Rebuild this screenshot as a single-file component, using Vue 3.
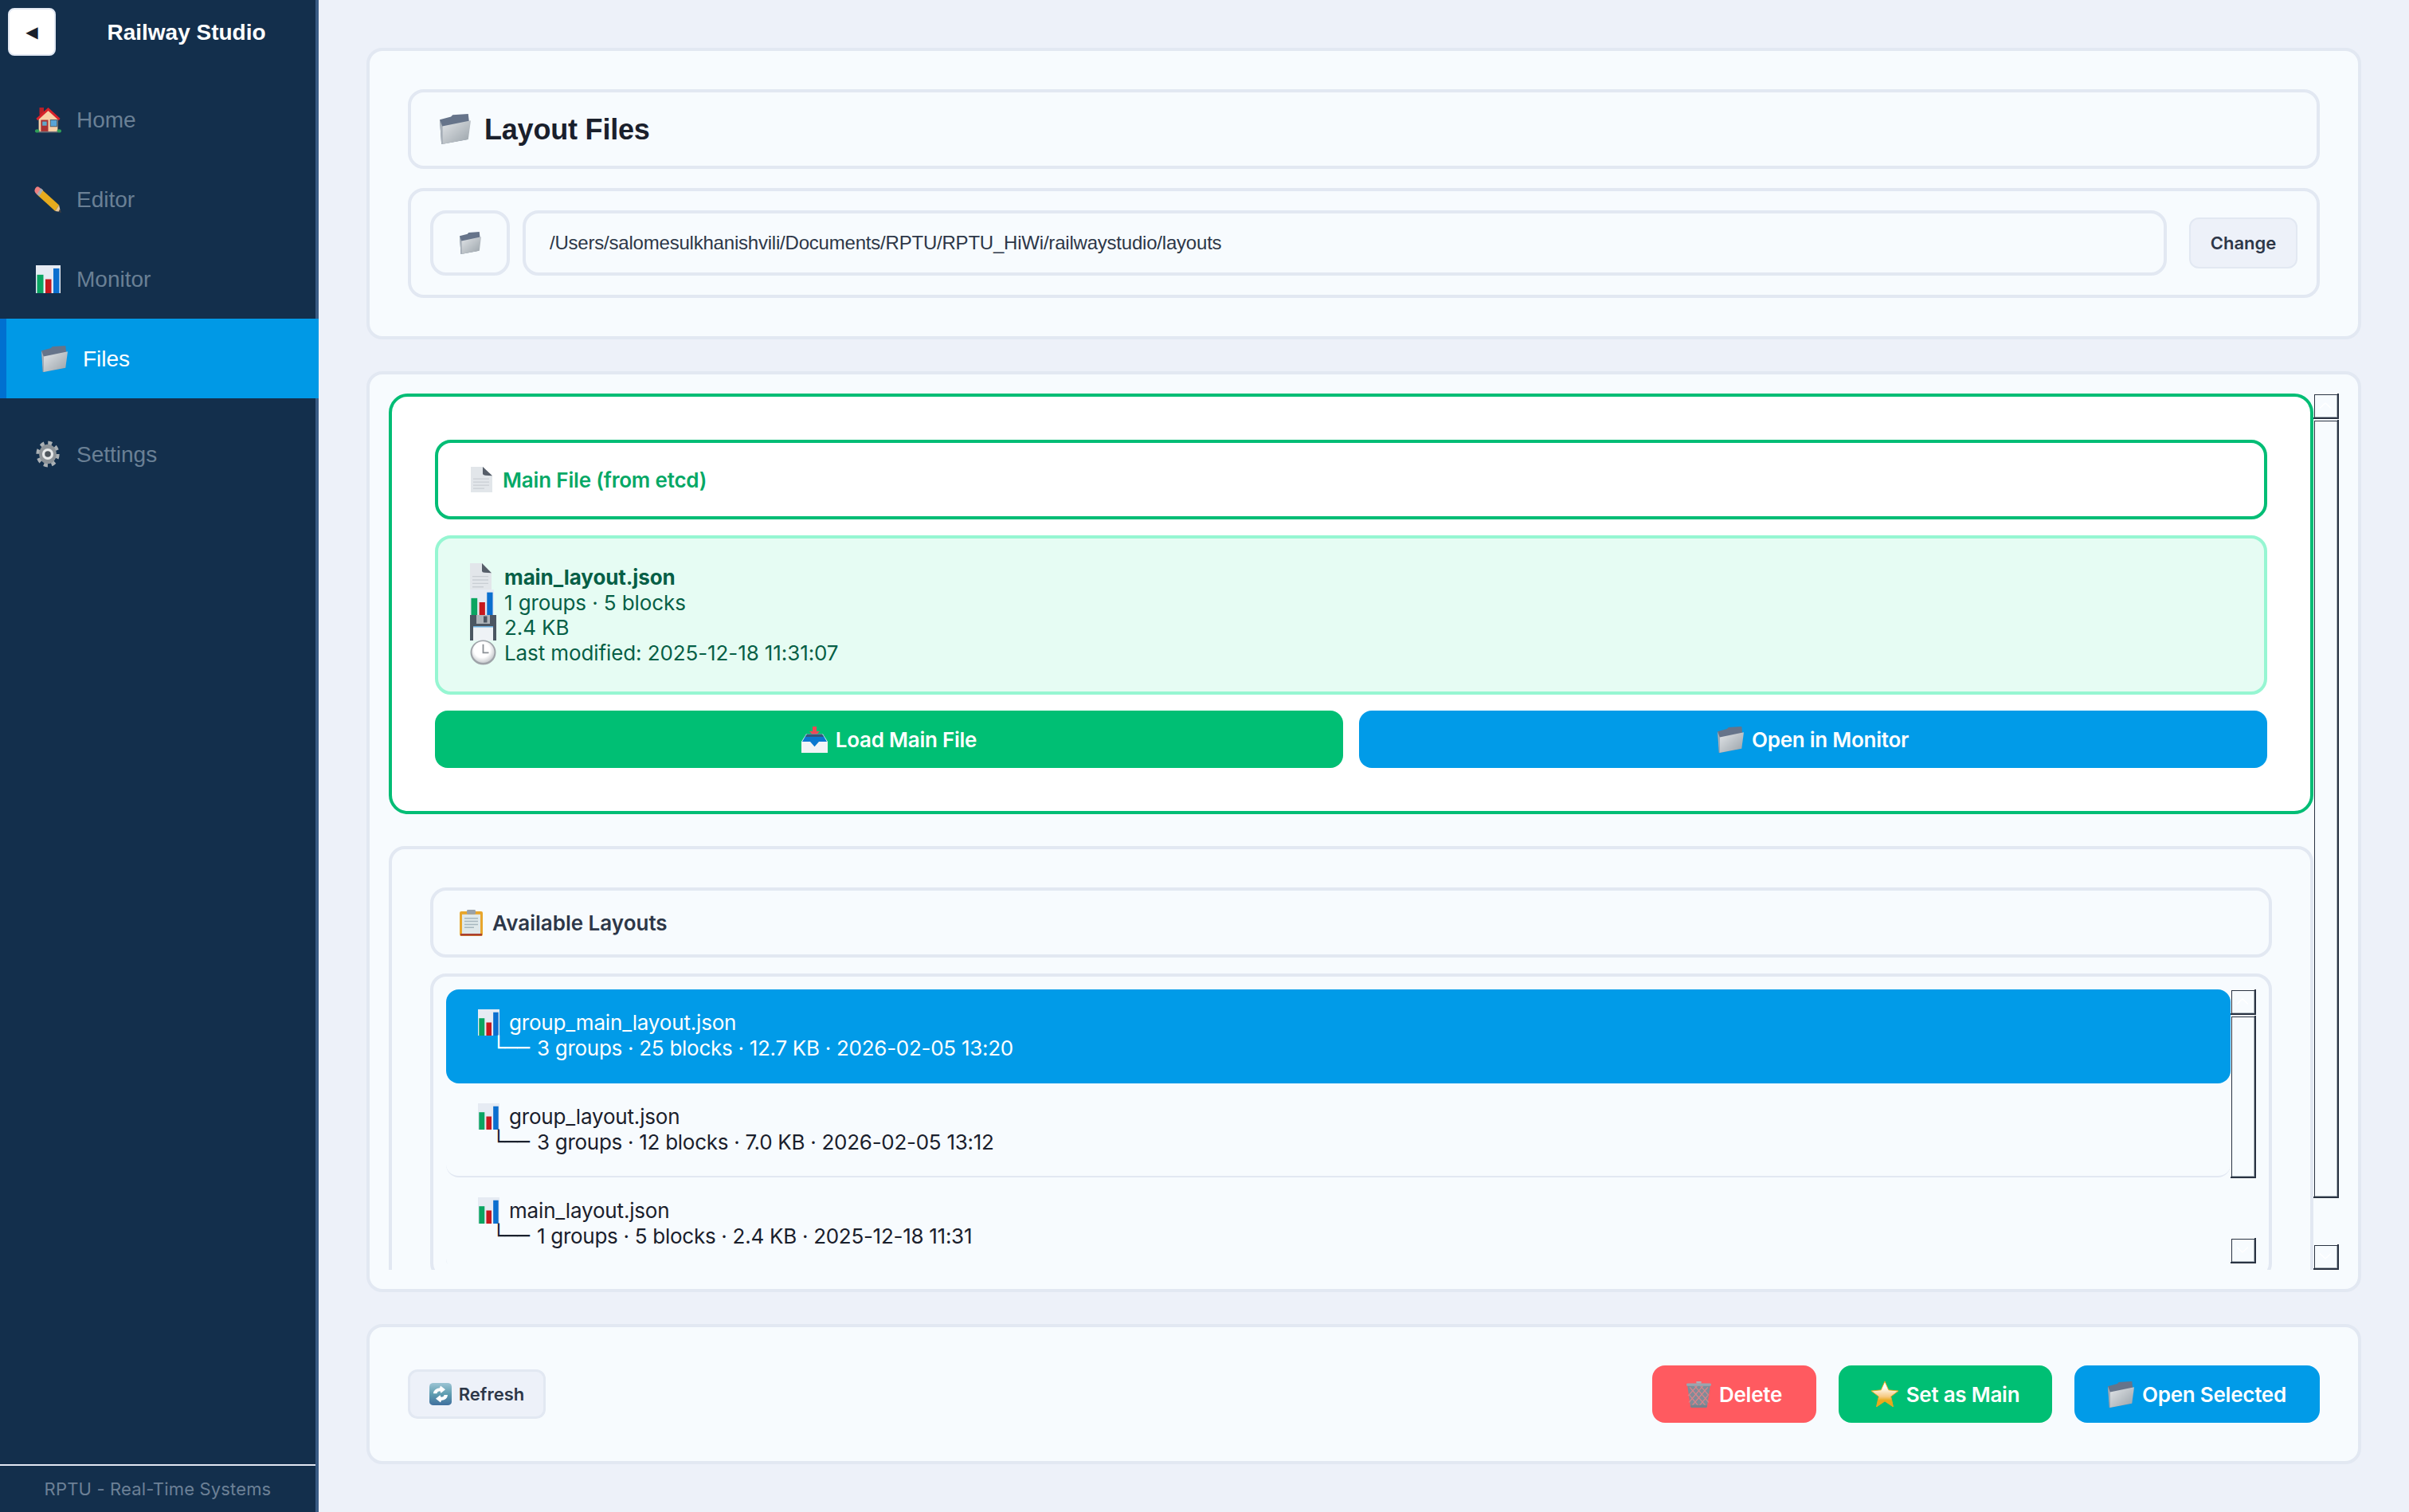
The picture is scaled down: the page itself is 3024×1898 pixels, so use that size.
<script setup>
const nav = [
  { label: 'Home', icon: 'house', cls: 'i-house' },
  { label: 'Editor', icon: 'pencil', cls: 'i-pencil' },
  { label: 'Monitor', icon: 'chart', cls: 'i-chart' },
  { label: 'Files', icon: 'folder', cls: 'i-folder', active: true },
  { label: 'Settings', icon: 'gear', cls: 'i-gear', sep: true }
]

const infoLines = [
  { icon: 'doc', text: 'main_layout.json', strong: true },
  { icon: 'chart', text: '1 groups · 5 blocks' },
  { icon: 'floppy', text: '2.4 KB' },
  { icon: 'clock', text: 'Last modified: 2025-12-18 11:31:07' }
]

const layouts = [
  { name: 'group_main_layout.json', meta: '3 groups · 25 blocks · 12.7 KB · 2026-02-05 13:20', selected: true },
  { name: 'group_layout.json', meta: '3 groups · 12 blocks · 7.0 KB · 2026-02-05 13:12' },
  { name: 'main_layout.json', meta: '1 groups · 5 blocks · 2.4 KB · 2025-12-18 11:31' }
]
</script>

<template>
  <div class="app">
    <!-- emoji aren't installed in the sandbox, so they live here as symbols -->
    <svg class="sprite" aria-hidden="true">
      <defs>
        <linearGradient id="g-folder" x1="0" y1="0" x2="1" y2="1">
          <stop offset="0" stop-color="#e2e5e8" />
          <stop offset="1" stop-color="#98a1a8" />
        </linearGradient>
        <linearGradient id="g-star" x1="0" y1="0" x2="0" y2="1">
          <stop offset="0.25" stop-color="#fffdf5" />
          <stop offset="0.6" stop-color="#f6c981" />
          <stop offset="0.75" stop-color="#e7a91c" />
        </linearGradient>
        <linearGradient id="g-refresh" x1="0" y1="0" x2="0" y2="1">
          <stop offset="0" stop-color="#9cc4d4" />
          <stop offset="0.5" stop-color="#5f9db0" />
          <stop offset="1" stop-color="#3f6f9e" />
        </linearGradient>
        <radialGradient id="g-clock" cx="0.45" cy="0.4" r="0.7">
          <stop offset="0.5" stop-color="#ffffff" />
          <stop offset="1" stop-color="#b4b8bc" />
        </radialGradient>
      </defs>

      <symbol id="house" viewBox="0 0 36 32" preserveAspectRatio="none">
        <rect x="6" y="1" width="6" height="9" fill="#b81f28" />
        <path d="M5 14 18 4l13 10v16H5z" fill="#f8cfa6" />
        <path d="M2.500 15.500 18 3l15.500 12.500" fill="none" stroke="#d9222a" stroke-width="3" />
        <rect x="8" y="16" width="10" height="14" fill="#a83232" />
        <rect x="10" y="18" width="6" height="5" fill="#5fa8c8" />
        <rect x="21" y="16" width="9" height="8" fill="#58a4d6" stroke="#50606a" />
        <ellipse cx="3" cy="29.500" rx="3" ry="2" fill="#2f9e57" />
        <ellipse cx="33" cy="29.500" rx="3" ry="2" fill="#2f9e57" />
        <rect x="5" y="30" width="26" height="1.500" fill="#70707a" />
      </symbol>

      <symbol id="pencil" viewBox="0 0 36 32" preserveAspectRatio="none">
        <path d="M27 30 4 11l5-7 23 19z" fill="#e6ab1e" />
        <path d="M4 11 9 4 6.500 2Q3.500 0 1.500 3T1.500 8.500z" fill="#ef7f7f" />
        <path d="M3.500 10 8.500 3l3 2.400-5 7z" fill="#a9acb0" />
        <path d="M27 30 32 23l2 8z" fill="#eac89a" />
        <path d="M33 27.500l2 4.500-3.600-1z" fill="#3d3d40" />
      </symbol>

      <symbol id="chart" viewBox="0 0 31 31" preserveAspectRatio="none">
        <rect width="31" height="31" fill="#e6ebf3" />
        <rect x="1.500" y="10.500" width="8" height="20.500" fill="#0aa562" />
        <rect x="12" y="15.500" width="7.500" height="15.500" fill="#c7181d" />
        <rect x="22" y="3.500" width="7.500" height="27.500" fill="#0b6fcf" />
      </symbol>

      <symbol id="folder" viewBox="0 0 36 32" preserveAspectRatio="none">
        <path d="M0 6 13 3l2-2 18-1 1 8-2 19L2 32z" fill="#66748a" />
        <path d="M3 13 36 7l-3 20L3 32z" fill="url(#g-folder)" />
        <path d="M0 6l3 7v19H2z" fill="#aab2ba" />
      </symbol>

      <symbol id="gear" viewBox="0 0 36 32" preserveAspectRatio="none">
        <circle cx="18" cy="16" r="12.500" fill="none" stroke="#aab0b4" stroke-width="6" stroke-dasharray="5 4.800" />
        <circle cx="18" cy="16" r="11.500" fill="#8d9398" />
        <ellipse cx="18" cy="16" rx="7.500" ry="6.500" fill="#e7e9ea" />
        <ellipse cx="18" cy="16" rx="4" ry="3.500" fill="#4e565d" />
      </symbol>

      <symbol id="doc" viewBox="0 0 27 40" preserveAspectRatio="none">
        <path d="M0 0h15l12 14v26H0z" fill="#e2e6ea" />
        <path d="M15 0v11q0 2 3 2.500l9 .500z" fill="#565e69" />
        <path d="M3 19h20M3 24h20M3 29h20M3 34h14" stroke="#c9ced3" stroke-width="1.500" />
      </symbol>

      <symbol id="floppy" viewBox="0 0 33 32" preserveAspectRatio="none">
        <rect width="33" height="32" fill="#4b5662" />
        <rect x="8" y="0" width="17" height="11" fill="#aeb4ba" />
        <rect x="17" y="1.500" width="4.500" height="8" fill="#4b5662" />
        <rect x="4" y="14" width="25" height="18" fill="#eef2f6" />
        <rect x="4" y="14" width="25" height="1.500" fill="#6fb2e0" />
      </symbol>

      <symbol id="clock" viewBox="0 0 33 33" preserveAspectRatio="none">
        <circle cx="16.500" cy="16.500" r="16" fill="#9ea3a8" />
        <circle cx="16.500" cy="16" r="14" fill="url(#g-clock)" />
        <path d="M16.500 6v11h7" fill="none" stroke="#8b9095" stroke-width="1.800" />
      </symbol>

      <symbol id="inbox" viewBox="0 0 33 38" preserveAspectRatio="none">
        <path d="M14 0h5v7h4l-6.500 8L10 7h4z" fill="#ee4a55" />
        <path d="M0 22 6 11h21l6 11v16H0z" fill="#f2f4f7" />
        <path d="M6 12h21l5 10H22l-5.500 7L11 22H1z" fill="#0b78d0" />
        <path d="M7 11h19l2 4H5z" fill="#36577a" />
      </symbol>

      <symbol id="clipboard" viewBox="0 0 29 34" preserveAspectRatio="none">
        <rect y="2" width="29" height="32" rx="2" fill="#e8a62c" />
        <rect x="3" y="6" width="23" height="25" fill="#dfe8ea" />
        <path d="M6 11h17M6 15h17M6 19h17M6 23h12" stroke="#a6b6be" stroke-width="1.500" />
        <rect x="9" y="0" width="11" height="6" rx="1.500" fill="#9aa2aa" />
        <rect x="1" y="31" width="27" height="2.500" fill="#a83a32" />
      </symbol>

      <symbol id="trash" viewBox="0 0 30 40" preserveAspectRatio="none">
        <path d="M1 5h28l-4 34H5z" fill="#7f8c98" />
        <path d="M4 9l20 29M10 7l17 25M17 7l10 14M3 20l12 18M26 9 6 38M20 7 3 32M13 7 2 22M27 20 15 38" stroke="#d9858b" stroke-width="1.300" />
        <rect x="0" y="3" width="30" height="4" rx="1.500" fill="#9aa5af" />
        <rect x="5" y="36" width="20" height="4" rx="1.500" fill="#76828d" />
        <rect x="12" y="0" width="6" height="3" fill="#a9b2ba" />
      </symbol>

      <symbol id="star" viewBox="0 0 34 36" preserveAspectRatio="none">
        <path d="M17 0l4.800 12.200L34 13.500l-9.300 8L27.500 36 17 28 6.500 36l2.800-14.500L0 13.500l12.200-1.300z" fill="url(#g-star)" stroke="#e9a71f" stroke-width="1" />
      </symbol>

      <symbol id="refresh" viewBox="0 0 28 32" preserveAspectRatio="none">
        <rect width="28" height="32" rx="5" fill="url(#g-refresh)" />
        <path d="M5 15q.500-7 8-8l1-3 6 5.500-5.500 5-1-2.800q-4 .5-4 3.300z" fill="#fff" />
        <path d="M23 17q-.5 7-8 8l-1 3-6-5.500 5.500-5 1 2.800q4-.5 4-3.300z" fill="#fff" />
      </symbol>
    </svg>

    <aside class="sidebar">
      <header class="side-head">
        <button class="toggle">◀</button>
        <div class="brand">Railway Studio</div>
      </header>
      <nav class="side-nav">
        <a
          v-for="item in nav"
          :key="item.label"
          class="nav-item"
          :class="{ active: item.active, sep: item.sep }"
        >
          <span class="nav-icon">
            <svg class="ico" :class="item.cls"><use :href="'#' + item.icon" /></svg>
          </span>
          <span class="nav-label">{{ item.label }}</span>
        </a>
      </nav>
      <footer class="side-foot">RPTU - Real-Time Systems</footer>
    </aside>

    <main class="main">
      <section class="panel panel-top">
        <div class="box page-title">
          <svg class="ico i-title"><use href="#folder" /></svg>
          <h1>Layout Files</h1>
        </div>
        <div class="box path-row">
          <button class="folder-btn">
            <svg class="ico i-small"><use href="#folder" /></svg>
          </button>
          <div class="path-input">/Users/salomesulkhanishvili/Documents/RPTU/RPTU_HiWi/railwaystudio/layouts</div>
          <button class="change-btn">Change</button>
        </div>
      </section>

      <section class="panel panel-mid">
        <div class="scroll-view">
          <div class="main-card">
            <div class="main-head">
              <svg class="ico i-doc"><use href="#doc" /></svg>
              <span>Main File (from etcd)</span>
            </div>
            <div class="info-box">
              <div v-for="line in infoLines" :key="line.text" class="info-line">
                <svg class="ico i-info" :class="'i-info-' + line.icon"><use :href="'#' + line.icon" /></svg>
                <strong v-if="line.strong">{{ line.text }}</strong>
                <span v-else>{{ line.text }}</span>
              </div>
            </div>
            <div class="main-actions">
              <button class="btn green">
                <svg class="ico i-btn"><use href="#inbox" /></svg>
                Load Main File
              </button>
              <button class="btn blue">
                <svg class="ico i-btn"><use href="#folder" /></svg>
                Open in Monitor
              </button>
            </div>
          </div>

          <div class="list-card">
            <div class="box list-head">
              <svg class="ico i-clip"><use href="#clipboard" /></svg>
              <span>Available Layouts</span>
            </div>
            <div class="box list-box">
              <div class="list-view">
                <div class="list-items">
                  <div v-for="f in layouts" :key="f.name" class="file-row" :class="{ selected: f.selected }">
                    <div class="file-name">
                      <svg class="ico i-file"><use href="#chart" /></svg>
                      <span>{{ f.name }}</span>
                    </div>
                    <div class="file-meta">
                      <span class="tree">└──</span>
                      <span>{{ f.meta }}</span>
                    </div>
                  </div>
                </div>
                <div class="sb sb-list">
                  <div class="sb-btn">
                    <svg viewBox="0 0 16 8"><path d="M1 7.500 8 1l7 6.500" /></svg>
                  </div>
                  <div class="sb-thumb"></div>
                  <div class="sb-btn sb-down">
                    <svg viewBox="0 0 16 8"><path d="M1 .5 8 7l7-6.500" /></svg>
                  </div>
                </div>
              </div>
            </div>
          </div>
        </div>
        <div class="sb sb-page">
          <div class="sb-btn">
            <svg viewBox="0 0 16 8"><path d="M1 7.500 8 1l7 6.500" /></svg>
          </div>
          <div class="sb-thumb"></div>
          <div class="sb-btn sb-down">
            <svg viewBox="0 0 16 8"><path d="M1 .5 8 7l7-6.500" /></svg>
          </div>
        </div>
      </section>

      <section class="panel panel-bottom">
        <button class="refresh-btn">
          <svg class="ico i-refresh"><use href="#refresh" /></svg>
          Refresh
        </button>
        <div class="bottom-actions">
          <button class="btn red act-delete">
            <svg class="ico i-trash"><use href="#trash" /></svg>
            Delete
          </button>
          <button class="btn green act-main">
            <svg class="ico i-star"><use href="#star" /></svg>
            Set as Main
          </button>
          <button class="btn blue act-open">
            <svg class="ico i-btn"><use href="#folder" /></svg>
            Open Selected
          </button>
        </div>
      </section>
    </main>
  </div>
</template>

<style>
html,
body {
  margin: 0;
  background: #edf1f9;
}
</style>

<style scoped>
.app {
  display: flex;
  width: 3024px;
  height: 1898px;
  overflow: hidden;
  font-family: 'Inter', sans-serif;
}

.sprite {
  position: absolute;
  width: 0;
  height: 0;
}

.ico {
  display: block;
  flex: none;
}

button {
  font-family: inherit;
  cursor: pointer;
}

/* sidebar */
.sidebar {
  width: 400px;
  flex: none;
  box-sizing: border-box;
  display: flex;
  flex-direction: column;
  background: #132f4c;
  border-right: 4px solid #3a5c85;
  font-family: 'Liberation Sans', sans-serif;
}

.side-head {
  display: flex;
  align-items: center;
  height: 100px;
  box-sizing: border-box;
  padding: 0 0 20px 10px;
}

.toggle {
  width: 60px;
  height: 60px;
  flex: none;
  padding: 0;
  background: #fff;
  border: 2px solid #e2e8f2;
  border-radius: 8px;
  color: #1a202c;
  font-family: 'DejaVu Sans', sans-serif;
  font-size: 20px;
}

.brand {
  flex: 1;
  text-align: center;
  color: #fff;
  font-size: 28px;
  font-weight: 700;
  padding: 2px 0 0 2px;
}

.side-nav {
  flex: 1;
  display: flex;
  flex-direction: column;
  margin-right: -4px;
}

.nav-item {
  display: flex;
  align-items: center;
  height: 100px;
  flex: none;
  padding-left: 42px;
  color: #6a8095;
  font-size: 28px;
}

.nav-item.active {
  padding-left: 42px;
  border-left: 8px solid #0070d0;
  background: #0099e6;
  color: #fff;
}

.nav-item.sep {
  margin-top: 20px;
}

.nav-label {
  padding-top: 2px;
}

.nav-icon {
  width: 36px;
  margin-right: 18px;
  display: flex;
  justify-content: center;
}

.i-house { width: 33px; height: 33px; }
.i-pencil { width: 35px; height: 34px; }
.i-chart { width: 31px; height: 35px; }
.i-folder { width: 33px; height: 33px; }
.i-gear { width: 34px; height: 34px; }

.side-foot {
  height: 60px;
  box-sizing: border-box;
  border-top: 2px solid #e2e8f2;
  text-align: center;
  line-height: 58px;
  color: #6c8096;
  font-family: 'Inter', sans-serif;
  font-size: 22px;
  letter-spacing: 0.16px;
}

/* main column */
.main {
  flex: 1;
  min-width: 0;
  box-sizing: border-box;
  padding: 60px;
  display: flex;
  flex-direction: column;
  gap: 40px;
  background: #edf1f9;
}

.panel {
  box-sizing: border-box;
  background: #f7fbfe;
  border: 4px solid #e2e8f2;
  border-radius: 20px;
}

.box {
  box-sizing: border-box;
  border: 4px solid #e2e8f2;
  border-radius: 20px;
}

.panel-top {
  height: 366px;
  padding: 48px;
  display: flex;
  flex-direction: column;
  gap: 24px;
}

.page-title {
  height: 100px;
  display: flex;
  align-items: center;
  gap: 17px;
  padding-left: 36px;
}

.i-title { width: 39px; height: 38px; }

h1 {
  margin: 2px 0 0;
  font-family: 'Liberation Sans', sans-serif;
  font-size: 36px;
  font-weight: 700;
  letter-spacing: -0.2px;
  color: #1a202c;
}

.path-row {
  height: 138px;
  display: flex;
  align-items: center;
  gap: 16px;
  padding: 0 24px;
}

.folder-btn {
  width: 100px;
  height: 82px;
  flex: none;
  display: flex;
  align-items: center;
  justify-content: center;
  background: transparent;
  border: 4px solid #e2e8f2;
  border-radius: 20px;
}

.i-small { width: 27px; height: 28px; }

.path-input {
  flex: 1;
  height: 82px;
  box-sizing: border-box;
  padding-left: 30px;
  border: 4px solid #e2e8f2;
  border-radius: 20px;
  color: #2d3748;
  font-family: 'Liberation Sans', sans-serif;
  font-size: 24px;
  letter-spacing: -0.21px;
  line-height: 74px;
}

.change-btn {
  width: 136px;
  height: 64px;
  flex: none;
  margin-left: 12px;
  padding: 0;
  background: #edf1f9;
  border: 2px solid #e2e8f2;
  border-radius: 12px;
  color: #2d3748;
  font-size: 22px;
  font-weight: 600;
}

.panel-mid {
  flex: 1;
  min-height: 0;
  padding: 24px;
  display: flex;
}

.scroll-view {
  flex: 1;
  min-width: 0;
  display: flex;
  flex-direction: column;
  gap: 40px;
  overflow: hidden;
}

.main-card {
  flex: none;
  height: 528px;
  box-sizing: border-box;
  padding: 54px;
  background: #fff;
  border: 4px solid #02bd75;
  border-radius: 24px;
  display: flex;
  flex-direction: column;
  gap: 20px;
}

.main-head {
  height: 100px;
  box-sizing: border-box;
  display: flex;
  align-items: center;
  gap: 13px;
  padding-left: 41px;
  border: 4px solid #02bd75;
  border-radius: 20px;
  color: #05a866;
  font-size: 26px;
  font-weight: 600;
  letter-spacing: -0.18px;
}

.i-doc { width: 27px; height: 32px; }

.info-box {
  height: 200px;
  box-sizing: border-box;
  padding: 33px 0 0 40px;
  background: #e6fcf3;
  border: 4px solid #96f6d2;
  border-radius: 20px;
  color: #065f46;
  font-size: 26px;
  letter-spacing: -0.1px;
}

.info-line {
  display: flex;
  align-items: center;
  gap: 10px;
  height: 31.500px;
}

.info-line strong {
  font-weight: 700;
}

.i-info { width: 33px; height: 32px; }
.i-info-doc { width: 27px; height: 35px; margin-right: 6px; }
.i-info-chart { width: 30px; margin-right: 3px; }

.main-actions {
  display: flex;
  gap: 20px;
}

.btn {
  height: 72px;
  box-sizing: border-box;
  display: flex;
  align-items: center;
  justify-content: center;
  gap: 10px;
  padding: 0;
  border: none;
  border-radius: 16px;
  color: #fff;
  font-size: 26px;
  font-weight: 600;
  letter-spacing: -0.25px;
}

.main-actions .btn {
  flex: 1;
}

.green { background: #00bf74; }
.blue { background: #019be8; }
.red { background: #ff5a60; }

.i-btn { width: 33px; height: 33px; }
.i-trash { width: 31px; height: 33px; }
.i-star { width: 34px; height: 32px; }

.list-card {
  flex: none;
  box-sizing: border-box;
  height: 640px;
  padding: 48px;
  background: #f7fbfe;
  border: 4px solid #e2e8f2;
  border-radius: 20px;
  display: flex;
  flex-direction: column;
  gap: 20px;
}

.list-head {
  height: 88px;
  flex: none;
  display: flex;
  align-items: center;
  gap: 12px;
  padding-left: 33px;
  color: #2d3748;
  font-size: 26px;
  font-weight: 600;
}

.i-clip { width: 29px; height: 33px; }

.list-box {
  flex: none;
  height: 384px;
  padding: 16px;
}

.list-view {
  height: 344px;
  display: flex;
}

.list-items {
  flex: 1;
  min-width: 0;
  overflow: hidden;
}

.file-row {
  height: 118px;
  box-sizing: border-box;
  padding: 26px 0 0 40px;
  border-bottom: 2px solid #e2e8f2;
  border-radius: 16px;
  color: #1a202c;
  font-size: 26px;
  line-height: 31.500px;
}

.file-row.selected {
  background: #019be8;
  border-bottom: none;
  color: #fff;
}

.file-name {
  display: flex;
  align-items: center;
  gap: 12px;
  height: 31.500px;
  letter-spacing: -0.18px;
}

.i-file { width: 27px; height: 33px; }

.file-meta {
  display: flex;
  gap: 9px;
  padding-left: 18px;
  letter-spacing: -0.28px;
}

.tree {
  font-family: 'DejaVu Sans', sans-serif;
  letter-spacing: 0;
}

/* the window's scrollbars, drawn because they show up in the shot */
.sb {
  width: 32px;
  flex: none;
  display: flex;
  flex-direction: column;
}

.sb-btn,
.sb-thumb {
  box-sizing: border-box;
  background: #f7fbfe;
  border-right: 2px solid #2a3342;
  border-bottom: 2px solid #2a3342;
  box-shadow: inset 1px 1px 0 #f7fbfe, inset 2px 2px 0 #2a3342, inset -1px -1px 0 #a9b3bb;
}

.sb-btn {
  height: 32px;
  flex: none;
  display: flex;
  align-items: center;
  justify-content: center;
}

.sb-btn svg {
  width: 16px;
  height: 8px;
  overflow: visible;
}

.sb-btn path {
  fill: none;
  stroke: #fff;
  stroke-width: 1.500;
}

.sb-down {
  margin-top: auto;
}

.sb-thumb {
  margin-top: 1px;
}

.sb-page .sb-thumb {
  height: 977px;
}

.sb-list .sb-thumb {
  height: 204px;
}

/* bottom bar */
.panel-bottom {
  height: 176px;
  padding: 0 48px;
  display: flex;
  align-items: center;
  justify-content: space-between;
}

.refresh-btn {
  width: 173px;
  height: 62px;
  box-sizing: border-box;
  display: flex;
  align-items: center;
  justify-content: center;
  gap: 9px;
  padding: 0;
  background: #edf1f9;
  border: 3px solid #e2e8f2;
  border-radius: 12px;
  color: #2d3748;
  font-size: 22px;
  font-weight: 600;
}

.i-refresh { width: 28px; height: 28px; }

.bottom-actions {
  display: flex;
  gap: 28px;
}

.act-delete { width: 206px; }
.act-main { width: 268px; }
.act-open { width: 308px; }
</style>
